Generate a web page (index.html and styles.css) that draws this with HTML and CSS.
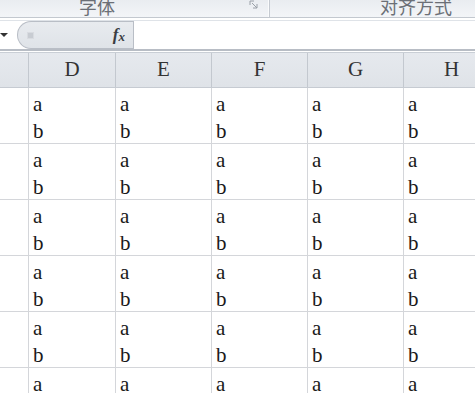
FILE: index.html
```html
<!DOCTYPE html>
<html lang="zh-CN">
<head>
    <meta charset="UTF-8">
    <title>Sheet</title>
    <link rel="stylesheet" href="styles.css">
</head>
<body>
    <div class="ribbon">
        <div class="ribbon-group font-group">
            <span class="group-title">字体</span>
            <span class="launcher">
                <svg width="9" height="9" viewBox="0 0 9 9"><path d="M1 1h4M1 1v4M3 3l5 5M8 4v4H4" stroke="#9aa0a8" fill="none"/></svg>
            </span>
        </div>
        <div class="ribbon-group align-group">
            <span class="group-title">对齐方式</span>
        </div>
    </div>
    <div class="formula-bar">
        <div class="name-box"><span class="arrow"></span></div>
        <div class="fx-pill">
            <span class="grip"></span>
            <span class="fx">f<sub>x</sub></span>
        </div>
        <div class="formula-input"></div>
    </div>
    <div class="grid">
        <div class="row header-row">
            <div class="cell stub"></div>
            <div class="cell col-d">D</div>
            <div class="cell">E</div>
            <div class="cell">F</div>
            <div class="cell">G</div>
            <div class="cell last">H</div>
        </div>
        <div class="row data-row">
            <div class="cell stub"></div>
            <div class="cell col-d">a<br>b</div>
            <div class="cell">a<br>b</div>
            <div class="cell">a<br>b</div>
            <div class="cell">a<br>b</div>
            <div class="cell last">a<br>b</div>
        </div>
        <div class="row data-row">
            <div class="cell stub"></div>
            <div class="cell col-d">a<br>b</div>
            <div class="cell">a<br>b</div>
            <div class="cell">a<br>b</div>
            <div class="cell">a<br>b</div>
            <div class="cell last">a<br>b</div>
        </div>
        <div class="row data-row">
            <div class="cell stub"></div>
            <div class="cell col-d">a<br>b</div>
            <div class="cell">a<br>b</div>
            <div class="cell">a<br>b</div>
            <div class="cell">a<br>b</div>
            <div class="cell last">a<br>b</div>
        </div>
        <div class="row data-row">
            <div class="cell stub"></div>
            <div class="cell col-d">a<br>b</div>
            <div class="cell">a<br>b</div>
            <div class="cell">a<br>b</div>
            <div class="cell">a<br>b</div>
            <div class="cell last">a<br>b</div>
        </div>
        <div class="row data-row">
            <div class="cell stub"></div>
            <div class="cell col-d">a<br>b</div>
            <div class="cell">a<br>b</div>
            <div class="cell">a<br>b</div>
            <div class="cell">a<br>b</div>
            <div class="cell last">a<br>b</div>
        </div>
        <div class="row data-row">
            <div class="cell stub"></div>
            <div class="cell col-d">a<br>b</div>
            <div class="cell">a<br>b</div>
            <div class="cell">a<br>b</div>
            <div class="cell">a<br>b</div>
            <div class="cell last">a<br>b</div>
        </div>
    </div>
</body>
</html>
```

FILE: styles.css
```css
body {
    margin: 0;
    width: 475px;
    height: 393px;
    overflow: hidden;
    background: #fff;
    font-family: "Liberation Serif", "Noto Sans CJK SC", serif;
    color: #222;
}
.ribbon {
    display: flex;
    height: 17px;
    background: linear-gradient(#e9ecf0, #f3f5f8);
    border-bottom: 1px solid #c3c8cf;
    overflow: hidden;
}
.ribbon-group {
    display: flex;
    align-items: flex-end;
    box-sizing: border-box;
}
.font-group {
    width: 270px;
    padding-left: 79px;
    border-right: 1px solid #c5cad1;
    box-shadow: inset -1px 0 0 #fafbfc;
}
.align-group {
    flex: 1;
    padding-left: 380px;
    margin-left: -270px;
}
.group-title {
    font-family: "Noto Sans CJK SC", sans-serif;
    font-size: 18px;
    line-height: 24px;
    color: #6b6f76;
    margin-bottom: -1px;
}
.launcher {
    margin-left: 134px;
    align-self: flex-start;
    line-height: 0;
}
.formula-bar {
    display: flex;
    height: 28px;
    margin-top: 2px;
    background: #fff;
    border-top: 1px solid #dfe3e8;
    border-bottom: 2px solid #b8bdc5;
}
.name-box {
    width: 17px;
    display: flex;
    align-items: center;
}
.arrow {
    width: 0;
    height: 0;
    border-left: 4px solid transparent;
    border-right: 4px solid transparent;
    border-top: 4px solid #333;
}
.fx-pill {
    display: flex;
    align-items: center;
    justify-content: space-between;
    width: 116px;
    box-sizing: border-box;
    padding: 0 8px 0 9px;
    background: linear-gradient(#e8ebef, #dfe3e8);
    border: 1px solid #b9bec6;
    border-right: none;
    border-radius: 15px 0 0 15px;
}
.grip {
    width: 5px;
    height: 5px;
    background: #c8ccd2;
    border: 1px solid #d8dbe0;
}
.fx {
    font-family: "Liberation Serif", serif;
    font-style: italic;
    font-weight: bold;
    font-size: 17px;
    color: #3a3d42;
}
.fx sub {
    font-size: 13px;
    vertical-align: -1px;
}
.formula-input {
    flex: 1;
    border-left: 1px solid #b9bec6;
}
.grid {
    margin-top: 1px;
    border-top: 1px solid #c9ced5;
}
.row {
    display: flex;
}
.cell {
    width: 96px;
    flex-shrink: 0;
    box-sizing: border-box;
    border-right: 1px solid #d4d6da;
}
.cell.stub {
    width: 29px;
}
.cell.col-d {
    width: 87px;
}
.header-row {
    height: 35px;
    box-sizing: border-box;
    background: linear-gradient(#e6e9ee, #dfe3e8);
    border-bottom: 1px solid #c6cbd2;
}
.header-row .cell {
    border-right-color: #c3c8cf;
    text-align: center;
    font-size: 21px;
    line-height: 33px;
    color: #333;
}
.data-row .cell {
    height: 56px;
    border-bottom: 1px solid #d4d6da;
    padding: 3px 0 0 4px;
    font-size: 21px;
    line-height: 27px;
    color: #1a1a1a;
}
.data-row .cell.stub {
    padding: 0;
}
```
